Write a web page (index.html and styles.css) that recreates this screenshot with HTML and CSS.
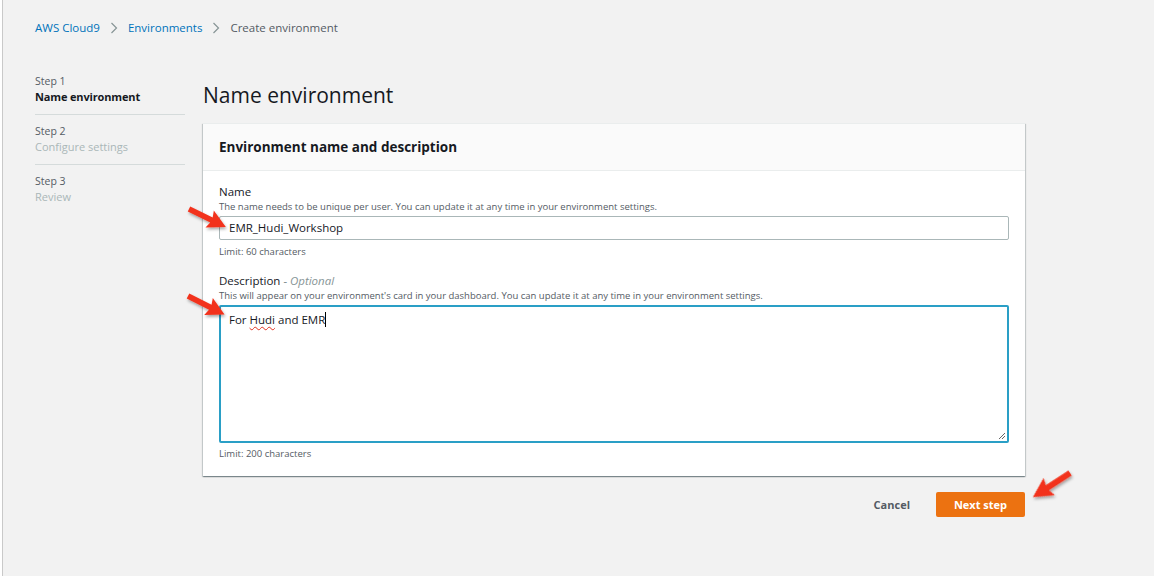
FILE: index.html
```html
<!DOCTYPE html>
<html lang="en">
<head>
<meta charset="utf-8">
<title>Create environment</title>
<link rel="stylesheet" href="styles.css">
</head>
<body>
<div class="page">
  <nav class="breadcrumbs">
    <a class="crumb-link">AWS Cloud9</a>
    <span class="crumb-sep"><svg width="8" height="12" viewBox="0 0 8 12"><path d="M1.5 1 L6.5 6 L1.5 11" fill="none" stroke="#879596" stroke-width="1.2"/></svg></span>
    <a class="crumb-link">Environments</a>
    <span class="crumb-sep"><svg width="8" height="12" viewBox="0 0 8 12"><path d="M1.5 1 L6.5 6 L1.5 11" fill="none" stroke="#879596" stroke-width="1.2"/></svg></span>
    <span class="crumb-current">Create environment</span>
  </nav>

  <div class="layout">
    <ul class="steps">
      <li class="step">
        <div class="step-num">Step 1</div>
        <div class="step-name active">Name environment</div>
      </li>
      <li class="step">
        <div class="step-num">Step 2</div>
        <div class="step-name">Configure settings</div>
      </li>
      <li class="step">
        <div class="step-num">Step 3</div>
        <div class="step-name">Review</div>
      </li>
    </ul>

    <main class="main">
      <h1 class="title">Name environment</h1>
      <section class="card">
        <header class="card-header">Environment name and description</header>
        <div class="card-body">
          <div class="field">
            <div class="label">Name</div>
            <div class="desc">The name needs to be unique per user. You can update it at any time in your environment settings.</div>
            <div class="input">EMR_Hudi_Workshop</div>
            <div class="hint">Limit: 60 characters</div>
          </div>
          <div class="field field-2">
            <div class="label">Description <em class="optional">- Optional</em></div>
            <div class="desc">This will appear on your environment's card in your dashboard. You can update it at any time in your environment settings.</div>
            <div class="textarea">For <span class="misspelled">Hudi</span> and EMR<span class="caret"></span>
              <svg class="grip" width="8" height="8" viewBox="0 0 8 8"><path d="M1 7 L7 1 M4 7 L7 4" stroke="#555" stroke-width="0.9"/></svg>
            </div>
            <div class="hint">Limit: 200 characters</div>
          </div>
        </div>
      </section>
      <div class="actions">
        <button class="btn-link">Cancel</button>
        <button class="btn-primary">Next step</button>
      </div>
    </main>
  </div>

  <svg class="annotations" width="1154" height="578" viewBox="0 0 1154 578">
    <defs>
      <filter id="sh" x="-50%" y="-50%" width="200%" height="200%">
        <feDropShadow dx="1" dy="2" stdDeviation="1.5" flood-color="#000" flood-opacity="0.35"/>
      </filter>
      <g id="arrow">
        <path d="M0 -2.8 L25 -2.8 L23 -9.5 L41 0 L23 9.5 L25 2.8 L0 2.8 Z" fill="#f2331c"/>
      </g>
    </defs>
    <g filter="url(#sh)">
      <use href="#arrow" transform="translate(189 209) rotate(26)"/>
      <use href="#arrow" transform="translate(188 296) rotate(27)"/>
      <use href="#arrow" transform="translate(1070 473) rotate(147) scale(1.08)"/>
    </g>
  </svg>
</div>
</body>
</html>
```

FILE: styles.css
```css
* { box-sizing: border-box; }

html, body {
  margin: 0;
  padding: 0;
  background: #ffffff;
}

body {
  font-family: "Open Sans", "Noto Sans", "Liberation Sans", sans-serif;
  color: #16191f;
}

.page {
  position: relative;
  margin-left: 2px;
  width: 1152px;
  height: 576px;
  background: #f2f2f2;
  border-left: 1px solid #c9c9c9;
  overflow: hidden;
}

.breadcrumbs {
  display: flex;
  align-items: center;
  gap: 10px;
  padding: 20px 0 0 32px;
  font-size: 11.5px;
  line-height: 16px;
}

.crumb-link { color: #0073bb; }
.crumb-current { color: #545b64; }
.crumb-sep { display: flex; align-items: center; }

.layout {
  display: flex;
  gap: 18px;
  padding: 37px 0 0 32px;
}

.steps {
  list-style: none;
  margin: 0;
  padding: 0;
  width: 150px;
  flex: none;
}

.step {
  padding: 8px 0 9px;
  border-bottom: 1px solid #d5dbdb;
  font-size: 10.5px;
  line-height: 16px;
}
.step:first-child { padding-top: 0; }
.step:last-child { border-bottom: none; }

.step-num { color: #545b64; }
.step-name { color: #aab7b8; font-size: 11px; }
.step-name.active { color: #16191f; font-weight: 700; letter-spacing: -0.15px; }

.main {
  width: 822px;
  flex: none;
  margin-top: 8px;
}

.title {
  margin: 0 0 14px;
  font-size: 21px;
  line-height: 28px;
  font-weight: 400;
  color: #16191f;
}

.card {
  background: #ffffff;
  box-shadow: 0 1px 1px 0 rgba(0,28,36,0.3), 1px 1px 1px 0 rgba(0,28,36,0.15), -1px 1px 1px 0 rgba(0,28,36,0.15);
  border-top: 1px solid #eaeded;
}

.card-header {
  background: #fafafa;
  border-bottom: 1px solid #eaeded;
  height: 47px;
  line-height: 46px;
  padding: 0 16px;
  font-size: 13.5px;
  font-weight: 700;
  color: #16191f;
}

.card-body {
  padding: 13px 16px 15px;
}

.label {
  font-size: 11.5px;
  line-height: 16px;
  color: #16191f;
}

.optional {
  color: #879596;
  font-style: italic;
}

.desc {
  font-size: 9.5px;
  line-height: 14px;
  color: #545b64;
}

.input {
  margin-top: 2px;
  height: 24px;
  border: 1px solid #aab7b8;
  border-radius: 2px;
  padding: 0 9px;
  font-size: 11.5px;
  line-height: 22px;
  color: #16191f;
  background: #fff;
}

.hint {
  margin-top: 5px;
  font-size: 9.5px;
  line-height: 14px;
  color: #545b64;
}

.field-2 { margin-top: 14px; }

.textarea {
  position: relative;
  margin-top: 2px;
  height: 138px;
  border: 2px solid #2a9fc6;
  border-radius: 2px;
  padding: 2px 8px;
  font-size: 11.5px;
  line-height: 22px;
  color: #16191f;
  background: #fff;
}
.textarea + .hint { margin-top: 4px; }

.misspelled {
  text-decoration: underline wavy #e0301e;
  text-decoration-thickness: 1px;
  text-underline-offset: 2px;
}

.caret {
  display: inline-block;
  width: 1px;
  height: 15px;
  background: #000;
  vertical-align: -3px;
}

.grip {
  position: absolute;
  right: 1px;
  bottom: 1px;
}

.actions {
  display: flex;
  justify-content: flex-end;
  align-items: center;
  gap: 26px;
  margin-top: 16px;
}

.btn-link, .btn-primary {
  font-family: inherit;
  font-size: 11px;
  font-weight: 700;
  border: none;
  cursor: pointer;
}

.btn-link {
  background: none;
  color: #545b64;
  padding: 0;
}

.btn-primary {
  background: #ec7211;
  color: #ffffff;
  width: 89px;
  height: 25px;
  border-radius: 2px;
  padding: 0;
}

.annotations {
  position: absolute;
  left: -3px;
  top: 0;
  pointer-events: none;
}
```
